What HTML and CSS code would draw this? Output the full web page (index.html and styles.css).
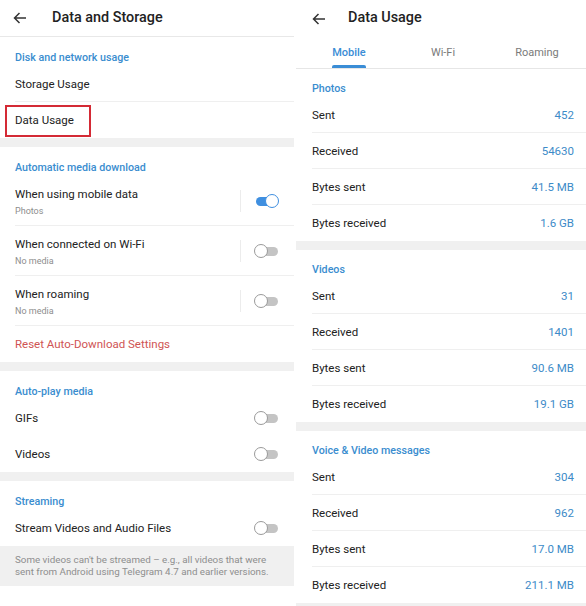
FILE: index.html
```html
<!DOCTYPE html>
<html>
<head>
<meta charset="utf-8">
<link rel="stylesheet" href="styles.css">
</head>
<body>
<div class="screen">
  <div class="panel left">
    <div class="appbar">
      <svg class="back" width="14" height="12" viewBox="0 0 14 12"><path d="M13 6H1.5M6.5 1L1.5 6l5 5" fill="none" stroke="#333" stroke-width="1.5"/></svg>
      <span class="apptitle">Data and Storage</span>
    </div>
    <div class="section">
      <div class="stitle">Disk and network usage</div>
      <div class="row sep">Storage Usage</div>
      <div class="row mark-row">Data Usage<span class="mark"></span></div>
    </div>
    <div class="band"></div>
    <div class="section">
      <div class="stitle">Automatic media download</div>
      <div class="trow sep">
        <div class="tlabel"><div class="main">When using mobile data</div><div class="sub">Photos</div></div>
        <div class="vdiv"></div>
        <div class="toggle on"><span class="knob"></span></div>
      </div>
      <div class="trow sep">
        <div class="tlabel"><div class="main">When connected on Wi-Fi</div><div class="sub">No media</div></div>
        <div class="vdiv"></div>
        <div class="toggle"><span class="knob"></span></div>
      </div>
      <div class="trow sep">
        <div class="tlabel"><div class="main">When roaming</div><div class="sub">No media</div></div>
        <div class="vdiv"></div>
        <div class="toggle"><span class="knob"></span></div>
      </div>
      <div class="row red">Reset Auto-Download Settings</div>
    </div>
    <div class="band"></div>
    <div class="section">
      <div class="stitle">Auto-play media</div>
      <div class="row between">GIFs<div class="toggle"><span class="knob"></span></div></div>
      <div class="row between">Videos<div class="toggle"><span class="knob"></span></div></div>
    </div>
    <div class="band"></div>
    <div class="section">
      <div class="stitle">Streaming</div>
      <div class="row between">Stream Videos and Audio Files<div class="toggle"><span class="knob"></span></div></div>
    </div>
    <div class="note">Some videos can't be streamed – e.g., all videos that were sent from Android using Telegram 4.7 and earlier versions.</div>
  </div>

  <div class="panel right">
    <div class="appbar r">
      <svg class="back" width="14" height="12" viewBox="0 0 14 12"><path d="M13 6H1.5M6.5 1L1.5 6l5 5" fill="none" stroke="#333" stroke-width="1.5"/></svg>
      <span class="apptitle">Data Usage</span>
    </div>
    <div class="tabs">
      <div class="tab active">Mobile</div>
      <div class="tab">Wi-Fi</div>
      <div class="tab">Roaming</div>
    </div>
    <div class="section rs">
      <div class="stitle">Photos</div>
      <div class="vrow sep"><span>Sent</span><span class="val">452</span></div>
      <div class="vrow sep"><span>Received</span><span class="val">54630</span></div>
      <div class="vrow sep"><span>Bytes sent</span><span class="val">41.5 MB</span></div>
      <div class="vrow"><span>Bytes received</span><span class="val">1.6 GB</span></div>
    </div>
    <div class="band"></div>
    <div class="section rs">
      <div class="stitle">Videos</div>
      <div class="vrow sep"><span>Sent</span><span class="val">31</span></div>
      <div class="vrow sep"><span>Received</span><span class="val">1401</span></div>
      <div class="vrow sep"><span>Bytes sent</span><span class="val">90.6 MB</span></div>
      <div class="vrow"><span>Bytes received</span><span class="val">19.1 GB</span></div>
    </div>
    <div class="band"></div>
    <div class="section rs">
      <div class="stitle">Voice &amp; Video messages</div>
      <div class="vrow sep"><span>Sent</span><span class="val">304</span></div>
      <div class="vrow sep"><span>Received</span><span class="val">962</span></div>
      <div class="vrow sep"><span>Bytes sent</span><span class="val">17.0 MB</span></div>
      <div class="vrow"><span>Bytes received</span><span class="val">211.1 MB</span></div>
    </div>
    <div class="band"></div>
  </div>
</div>
</body>
</html>
```

FILE: styles.css
```css
html, body {
  margin: 0;
  padding: 0;
  background: #fff;
}
body {
  font-family: Roboto, "Liberation Sans", sans-serif;
  color: #222;
  width: 586px;
  height: 606px;
  overflow: hidden;
}
.screen {
  display: flex;
  gap: 2px;
  height: 606px;
  overflow: hidden;
}
.panel {
  display: flex;
  flex-direction: column;
}
.panel > * {
  flex: none;
}
.left {
  width: 294px;
}
.right {
  flex: 1;
}
.appbar {
  height: 36px;
  border-bottom: 1px solid #e8e8e8;
  display: flex;
  align-items: center;
  padding-left: 13px;
}
.appbar.r {
  border-bottom: none;
  height: 37px;
  padding-left: 16px;
}
.back {
  flex: none;
}
.apptitle {
  font-size: 14.4px;
  font-weight: 500;
  color: #222;
  margin-left: 25px;
  padding-bottom: 2px;
}
.appbar.r .apptitle {
  margin-left: 22px;
}
.section {
  padding-left: 15px;
  display: flex;
  flex-direction: column;
}
.section > * {
  flex: none;
}
.section.rs {
  padding-left: 16px;
}
.stitle {
  height: 29px;
  box-sizing: border-box;
  padding-top: 14px;
  line-height: 14px;
  font-size: 10.7px;
  font-weight: 500;
  color: #3a8dcf;
}
.rs .stitle {
  height: 28px;
  padding-top: 13px;
}
.row {
  height: 36px;
  display: flex;
  align-items: center;
  font-size: 11.5px;
  color: #222;
  padding-right: 15px;
  box-sizing: border-box;
  position: relative;
}
.sep {
  border-bottom: 1px solid #efefef;
}
.between {
  justify-content: space-between;
}
.red {
  color: #cf5454;
}
.mark {
  position: absolute;
  left: -10px;
  top: 3px;
  width: 86px;
  height: 32px;
  box-sizing: border-box;
  border: 2px solid #d42a35;
}
.trow {
  height: 50px;
  display: flex;
  align-items: center;
  padding-right: 15px;
  box-sizing: border-box;
}
.tlabel {
  flex: 1;
  display: flex;
  flex-direction: column;
  gap: 3px;
  padding-top: 2px;
}
.main {
  font-size: 11.5px;
  line-height: 15px;
}
.sub {
  font-size: 9px;
  line-height: 12px;
  color: #8d8d8d;
}
.vdiv {
  width: 1px;
  height: 22px;
  background: #ececec;
  margin-right: 13px;
}
.toggle {
  width: 25px;
  height: 14px;
  position: relative;
  flex: none;
}
.toggle::before {
  content: "";
  position: absolute;
  left: 2px;
  right: 1px;
  top: 3px;
  height: 9px;
  border-radius: 5px;
  background: #c4c4c4;
}
.toggle .knob {
  position: absolute;
  left: 0;
  top: 0;
  width: 14px;
  height: 14px;
  box-sizing: border-box;
  border-radius: 50%;
  background: #fff;
  border: 1.2px solid #9a9a9a;
}
.toggle.on::before {
  background: #3f8fe0;
}
.toggle.on .knob {
  left: auto;
  right: 0;
  border-color: #3f8fe0;
}
.band {
  height: 9px;
  background: #f0f0f0;
}
.note {
  background: #f0f0f0;
  padding: 8px 15px 9px 15px;
  font-size: 9.8px;
  line-height: 11.5px;
  color: #8e8e8e;
}
.tabs {
  height: 31px;
  border-bottom: 1px solid #e6e6e6;
  display: flex;
  padding: 0 2px 0 6px;
}
.tab {
  flex: 1;
  display: flex;
  align-items: center;
  justify-content: center;
  font-size: 11px;
  color: #7a7a7a;
  position: relative;
  padding-bottom: 1px;
}
.tab.active {
  color: #3a8dd6;
  font-weight: 500;
}
.tab.active::after {
  content: "";
  position: absolute;
  left: 50%;
  transform: translateX(-50%);
  bottom: 0;
  width: 34px;
  height: 3px;
  border-radius: 2px 2px 0 0;
  background: #3a8dd6;
}
.vrow {
  height: 36px;
  display: flex;
  align-items: center;
  justify-content: space-between;
  font-size: 11.5px;
  padding-right: 12px;
  box-sizing: border-box;
}
.val {
  color: #3d8bc8;
}
```
